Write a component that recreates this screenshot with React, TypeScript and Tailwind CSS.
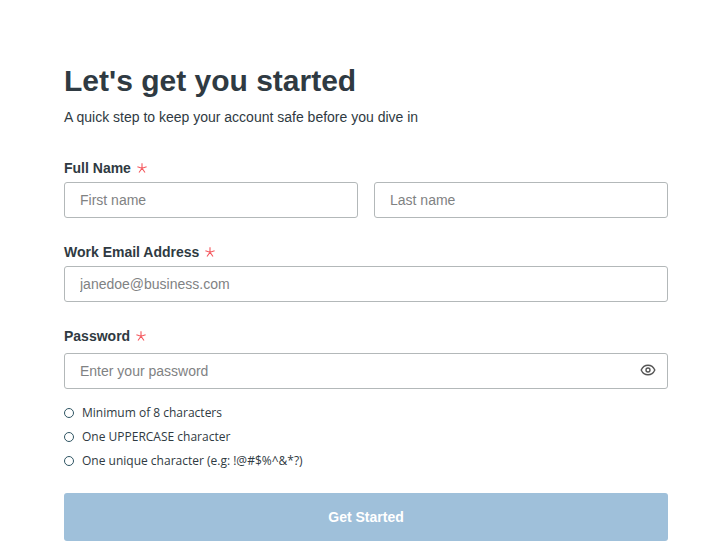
import { useState } from "react";
import type { InputHTMLAttributes, ReactNode } from "react";

const passwordRules = [
    "Minimum of 8 characters",
    "One UPPERCASE character",
    "One unique character (e.g: !@#$%^&*?)",
];

const RequiredMark = () => (
    <svg viewBox="0 0 10 10" className="size-[10px]" fill="none" stroke="#f4585e" strokeWidth="1.1" aria-hidden="true">
        <path d="M5 5.2V0.3M5 5.2L0.4 3.8M5 5.2L9.6 3.8M5 5.2L2 9.500M5 5.2L8 9.500" />
    </svg>
);

const FieldLabel = ({ htmlFor, children }: { htmlFor: string; children: ReactNode }) => (
    <label htmlFor={htmlFor} className="flex items-center gap-1.5 text-sm leading-5 font-bold">
        {children}
        <RequiredMark />
    </label>
);

const TextField = (props: InputHTMLAttributes<HTMLInputElement>) => (
    <input
        {...props}
        className="block h-9 w-full min-w-0 rounded-[3px] border border-[#b3b8b9] bg-white px-[15px] text-sm text-[#2f3a42] outline-none placeholder:text-[#7f8283] focus:border-[#5b93b8]"
    />
);

const EyeIcon = () => (
    <svg viewBox="0 0 16 12" className="h-3 w-4" fill="none" stroke="#555" strokeWidth="1.4" aria-hidden="true">
        <path d="M1.2 6C2.6 2.8 5 1.200 8 1.200s5.400 1.600 6.800 4.800C13.400 9.200 11 10.800 8 10.800S2.600 9.200 1.200 6Z" />
        <circle cx="8" cy="6" r="2" />
    </svg>
);

export default function App() {
    const [visible, setVisible] = useState(false);

    return (
        <main className="bg-white pt-16 pr-[34px] pl-16 font-['Liberation_Sans',Arial,sans-serif] text-[#2f3a42]">
            <h1 className="text-[30px] leading-[34px] font-bold">Let's get you started</h1>
            <p className="mt-[9px] text-sm leading-5">A quick step to keep your account safe before you dive in</p>

            <form className="mt-[31px]" onSubmit={(e) => e.preventDefault()}>
                <div className="flex flex-col gap-1">
                    <FieldLabel htmlFor="first-name">Full Name</FieldLabel>
                    <div className="grid grid-cols-2 gap-4">
                        <TextField id="first-name" type="text" placeholder="First name" />
                        <TextField type="text" aria-label="Last name" placeholder="Last name" />
                    </div>
                </div>

                <div className="mt-6 flex flex-col gap-1">
                    <FieldLabel htmlFor="email">Work Email Address</FieldLabel>
                    <TextField id="email" type="email" placeholder="janedoe@business.com" />
                </div>

                <div className="mt-6 flex flex-col gap-[7px]">
                    <FieldLabel htmlFor="password">Password</FieldLabel>
                    <div className="relative">
                        <TextField id="password" type={visible ? "text" : "password"} placeholder="Enter your password" />
                        <button
                            type="button"
                            aria-label="Toggle password visibility"
                            onClick={() => setVisible(!visible)}
                            className="absolute top-[11px] right-3"
                        >
                            <EyeIcon />
                        </button>
                    </div>
                </div>

                <ul className="mt-4 flex flex-col gap-2 font-['Open_Sans',sans-serif] text-xs leading-4">
                    {passwordRules.map((rule) => (
                        <li key={rule} className="flex items-center gap-2">
                            <span className="size-[10px] rounded-full border border-[#2f5563]" />
                            {rule}
                        </li>
                    ))}
                </ul>

                <button type="submit" className="mt-6 h-12 w-full rounded-[3px] bg-[#9fc0da] text-sm font-bold text-white">
                    Get Started
                </button>
            </form>
        </main>
    );
}
